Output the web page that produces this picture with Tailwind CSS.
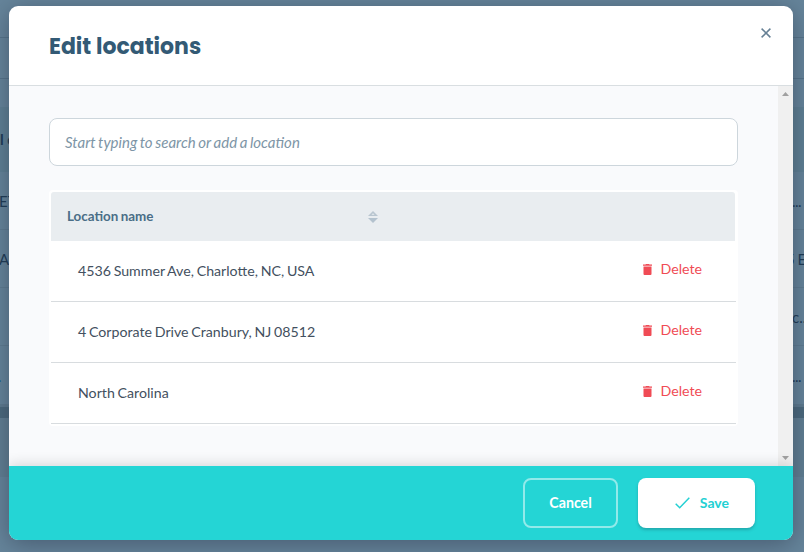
<!DOCTYPE html>
<html lang="en">
<head>
<meta charset="utf-8">
<title>Edit locations</title>
<script src="https://cdn.jsdelivr.net/npm/@tailwindcss/browser@4"></script>
</head>
<body class="relative w-[804px] h-[552px] overflow-hidden bg-[#66859b] font-['Lato',sans-serif] text-[#435060]">
  <!-- dimmed page behind the dialog -->
  <div aria-hidden="true" class="absolute inset-0 flex flex-col text-[15px] text-[#1d3a54] whitespace-nowrap">
    <div class="h-[38px] shrink-0 border-b border-[#56748a]"></div>
    <div class="h-[41px] shrink-0 border-b border-[#56748a]"></div>
    <div class="h-[28px] shrink-0"></div>
    <div class="h-[65px] shrink-0 bg-[#5f8094] flex items-center font-bold"><span>l c</span></div>
    <div class="h-[58px] shrink-0 border-b border-[#5e7c91] flex items-center justify-between pt-0.5"><span class="-ml-px">ET</span><span class="w-3 tracking-[-0.5px]">...</span></div>
    <div class="h-[58px] shrink-0 border-b border-[#5e7c91] flex items-center justify-between pt-0.5"><span class="-ml-px">A</span><span class="w-[18px] tracking-[-0.5px]">5 E</span></div>
    <div class="h-[58px] shrink-0 border-b border-[#5e7c91] flex items-center justify-end pt-0.5"><span class="w-3">c...</span></div>
    <div class="h-[58px] shrink-0 flex items-center justify-between pt-0.5"><span class="-ml-[2px] text-[#1f6092]">.</span><span class="w-3 tracking-[-0.5px]">...</span></div>
    <div class="h-[3px] shrink-0 bg-[#5e7b8f]"></div>
    <div class="h-[11px] shrink-0 bg-[#4b697d]"></div>
    <div class="h-[59px] shrink-0 bg-[#617f93]"></div>
  </div>

  <section role="dialog" class="absolute left-[9px] top-[6px] w-[784px] h-[534px] rounded-[9px] overflow-hidden flex flex-col bg-white shadow-[0_4px_24px_rgba(40,50,70,0.5)]">
    <header class="h-20 shrink-0 border-b border-[#d9dee1] flex justify-between pl-10 pr-[22px]">
      <h1 class="pt-6 font-['Poppins','Inter',sans-serif] font-bold text-[22px] leading-[34px] text-[#335a75]">Edit locations</h1>
      <button class="mt-[22px] size-[10px]" aria-label="Close"><svg class="block" width="10" height="10" viewBox="0 0 10 10" fill="none" stroke="#668095" stroke-width="1.5"><path d="M.6.6l8.8 8.8M9.4.6L.6 9.4"/></svg></button>
    </header>
    <div class="h-[380px] shrink-0 flex bg-[#f9fafc]">
      <main class="w-[769px] pl-10 pr-10 pt-8">
        <div class="h-12 rounded-lg border border-[#cdd6dc] bg-white flex items-center px-[15px] italic text-[15px] [word-spacing:-0.9px] text-[#7d95a6]"><span class="pt-px">Start typing to search or add a location</span></div>
        <div class="mt-6 h-[236px] rounded border-2 border-white bg-white">
          <div class="h-[49px] w-[684px] rounded-t-[3px] bg-[#e9edf0] flex items-center pl-4 font-bold text-[13.4px] [word-spacing:-0.8px] text-[#4a6e87]">
            <span class="w-[301px]">Location name</span>
            <svg width="10" height="12" viewBox="0 0 10 12"><path d="M0 5L5 0l5 5z" fill="#b9c6d0"/><path d="M3.5 3.7L5 2.2l1.5 1.5z" fill="#e9edf0"/><path d="M0 7h10l-5 5z" fill="#b3c2ce"/></svg>
          </div>
          <div class="h-[61px] border-b border-[#d8dcdf] flex items-center justify-between pl-[27px] pr-[34px] pb-0.5 text-[14.2px] [word-spacing:-0.9px]">
            <span class="pt-0.5">4536 Summer Ave, Charlotte, NC, USA</span>
            <button class="-mt-[3px] flex items-center gap-2 text-[#f04b55]"><svg class="mt-0.5" width="9" height="11" viewBox="0 0 9 11" fill="currentColor"><path d="M0 .6h2.5L3 0h3l.5.6H9v1.2H0zM.5 2.5h8V10q0 1-1 1h-6q-1 0-1-1z"/></svg>Delete</button>
          </div>
          <div class="h-[61px] border-b border-[#d8dcdf] flex items-center justify-between pl-[27px] pr-[34px] pb-0.5 text-[14.2px] [word-spacing:-0.9px]">
            <span class="pt-0.5">4 Corporate Drive Cranbury, NJ 08512</span>
            <button class="-mt-[3px] flex items-center gap-2 text-[#f04b55]"><svg class="mt-0.5" width="9" height="11" viewBox="0 0 9 11" fill="currentColor"><path d="M0 .6h2.5L3 0h3l.5.6H9v1.2H0zM.5 2.5h8V10q0 1-1 1h-6q-1 0-1-1z"/></svg>Delete</button>
          </div>
          <div class="h-[61px] border-b border-[#d8dcdf] flex items-center justify-between pl-[27px] pr-[34px] pb-0.5 text-[14.2px] [word-spacing:-0.9px]">
            <span class="pt-0.5">North Carolina</span>
            <button class="-mt-[3px] flex items-center gap-2 text-[#f04b55]"><svg class="mt-0.5" width="9" height="11" viewBox="0 0 9 11" fill="currentColor"><path d="M0 .6h2.5L3 0h3l.5.6H9v1.2H0zM.5 2.5h8V10q0 1-1 1h-6q-1 0-1-1z"/></svg>Delete</button>
          </div>
        </div>
      </main>
      <div class="w-[15px] bg-[#f0f0f0] flex flex-col items-center justify-between pt-[6px] pb-[6px]">
        <svg width="7" height="4" viewBox="0 0 7 4"><path d="M0 4L3.5 0 7 4z" fill="#a0a0a0"/></svg>
        <svg width="7" height="4" viewBox="0 0 7 4"><path d="M0 0h7L3.5 4z" fill="#a0a0a0"/></svg>
      </div>
    </div>
    <footer class="relative h-[74px] shrink-0 bg-[#24d5d5] flex items-start justify-end gap-5 pt-3 pr-[38px] font-bold text-[14px] shadow-[0_-2px_12px_rgba(0,0,0,0.14)]">
      <button class="w-[95px] h-[50px] rounded-lg border-2 border-white/50 text-white text-[14.2px]">Cancel</button>
      <button class="w-[117px] h-[50px] rounded-lg bg-white text-[#24d0d3] flex items-center justify-end gap-[10px] pr-[26px] shadow-[0_2px_3px_rgba(30,90,100,0.35)]"><svg width="15" height="12" viewBox="0 0 15 12" fill="none" stroke="currentColor" stroke-width="1.5"><path d="M.7 6.7l4 4L14.3.8"/></svg><span class="pb-0.5">Save</span></button>
    </footer>
  </section>
</body>
</html>
